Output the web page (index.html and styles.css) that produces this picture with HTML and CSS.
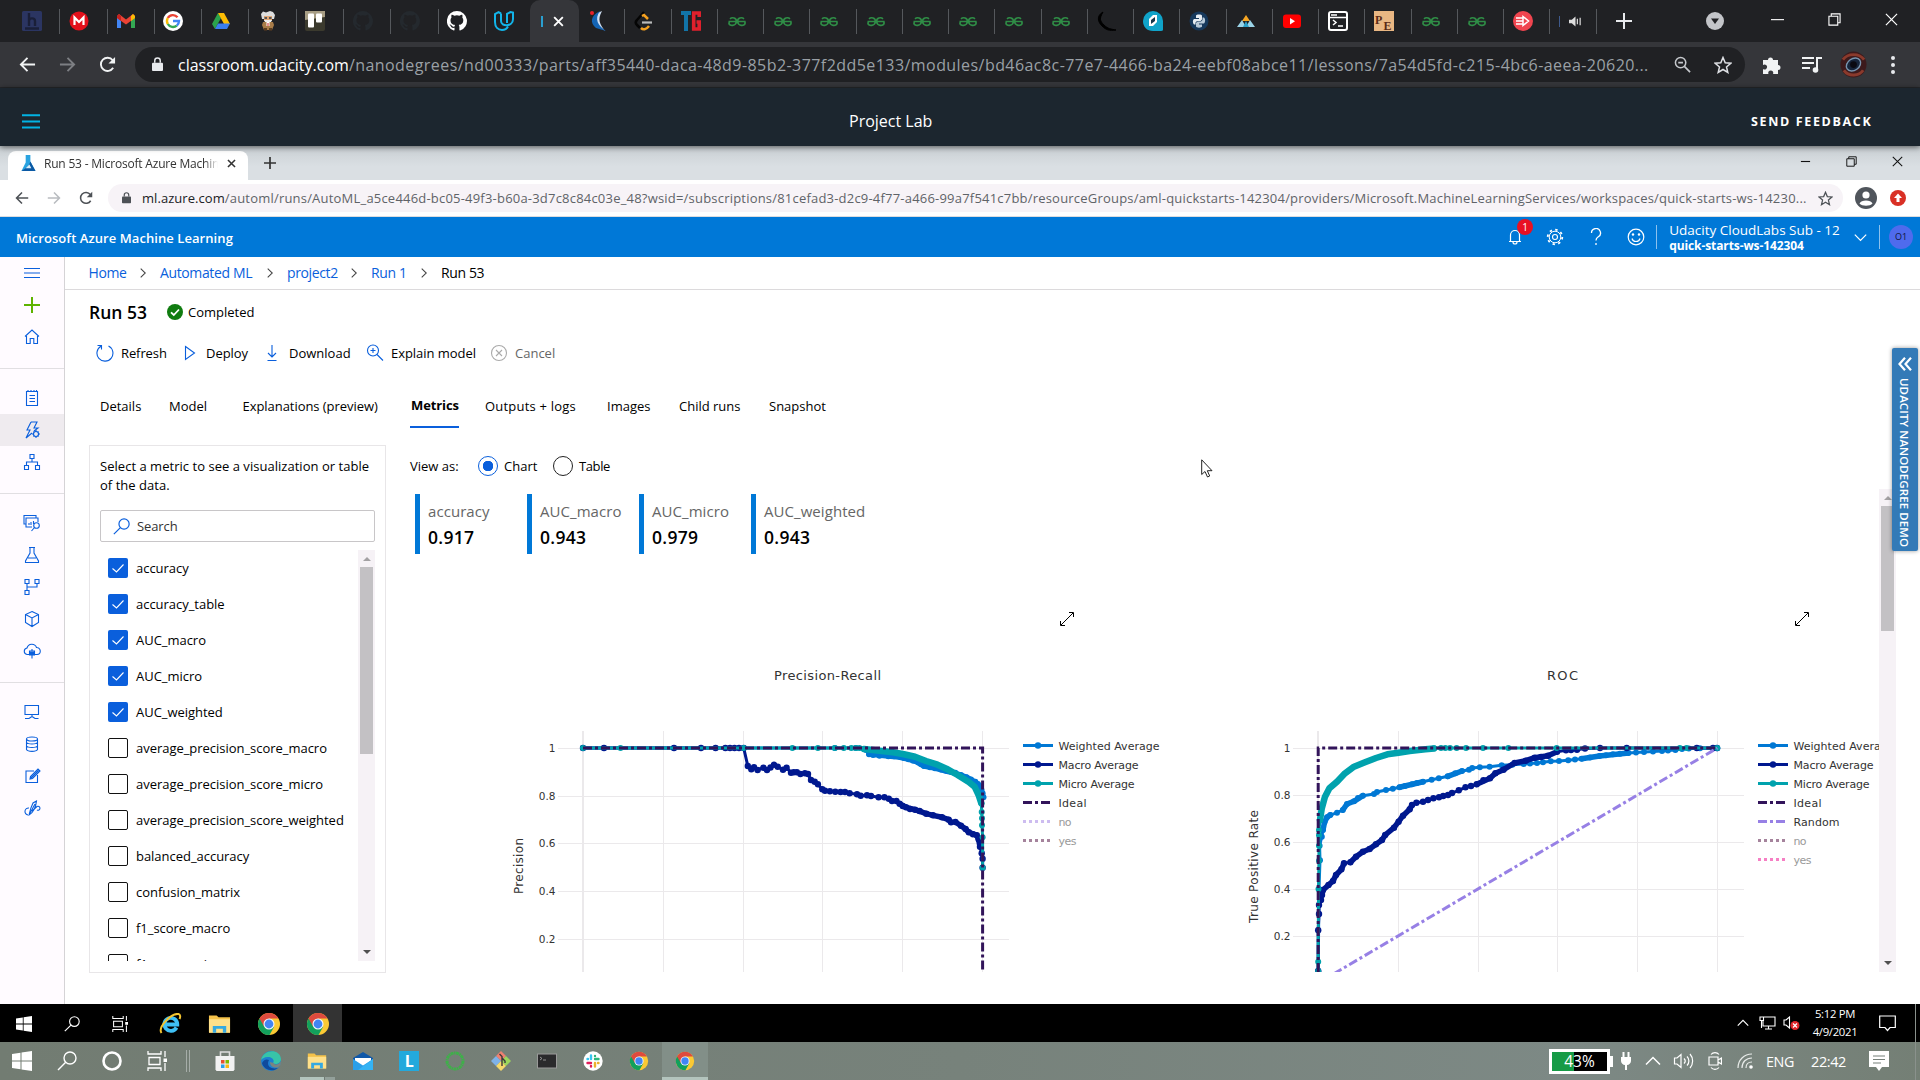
FILE: index.html
```html
<!DOCTYPE html>
<html lang="en">
<head>
<meta charset="utf-8">
<title>Project Lab</title>
<link rel="stylesheet" href="styles.css">
</head>
<body>
<svg class="defs" aria-hidden="true">
  <symbol id="gfg" viewBox="0 0 20 20"><path d="M1.500 10.500H18.500M9.500 10.500C9 15 2.500 15.500 2 12.500C2 10.500 2.500 10.500 2.500 10.500M3 7.800C5 6 9.500 6.500 9.500 10.500M10.500 10.500C11 15 17.500 15.500 18 12.500V10.500M17 7.800C15 6 10.500 6.500 10.500 10.500" fill="none" stroke="#2f8d46" stroke-width="1.700"/></symbol>
  <symbol id="github" viewBox="0 0 20 20"><path fill="currentColor" d="M10 0a10 10 0 0 0-3.200 19.500c.5.1.7-.2.7-.5v-2.200c-2.800.6-3.400-1.100-3.400-1.100-.5-1.200-1.100-1.500-1.100-1.500-.9-.6.1-.6.100-.6 1 .1 1.500 1 1.500 1 .9 1.500 2.400 1.100 2.900.8.100-.6.4-1.100.6-1.300-2.200-.3-4.600-1.100-4.600-5 0-1.100.4-2 1-2.700-.1-.3-.4-1.300.1-2.700 0 0 .9-.3 2.800 1a9.500 9.500 0 0 1 5 0c1.900-1.300 2.800-1 2.800-1 .5 1.400.2 2.400.1 2.700.6.7 1 1.600 1 2.700 0 3.900-2.400 4.700-4.600 5 .4.300.7.900.7 1.900V19c0 .3.200.6.700.5A10 10 0 0 0 10 0z"/></symbol>
  <symbol id="chrome" viewBox="0 0 24 24"><circle cx="12" cy="12" r="11" fill="#fbc934"/><path d="M12 12 2.500 6.500A11 11 0 0 0 12.500 23L17 15z" fill="#12a05c"/><path d="M2.500 6.500A11 11 0 0 1 21.500 6.500H12L7 14.500z" fill="#de4a3e"/><circle cx="12" cy="12" r="5.500" fill="#f4f6fb"/><circle cx="12" cy="12" r="4.400" fill="#4285f4"/></symbol>
  <symbol id="win" viewBox="0 0 20 20"><path fill="#fff" d="M0 3 8.500 1.800V9.500H0zM9.500 1.600 20 0V9.500H9.500zM0 10.500H8.500V18.200L0 17zM9.500 10.500H20V20L9.500 18.400z"/></symbol>
  <symbol id="lens" viewBox="0 0 20 20"><g fill="none" stroke="currentColor" stroke-width="1.400"><circle cx="13" cy="7" r="6"/><path d="M8.700 11.300 1 19"/></g></symbol>
  <symbol id="taskview" viewBox="0 0 20 20"><path d="M1 0V3H14V0M1 20V17H14V20M2 6.500H13V13.500H2zM18 0V6M18 12V20" fill="none" stroke="#fff" stroke-width="1.300"/><path d="M16.500 7.500H20V11H16.500z" fill="#fff"/></symbol>
  <symbol id="folder" viewBox="0 0 24 22"><path d="M1 2H9L11 4H23V20H1z" fill="#f5c24a"/><path d="M1 6H23V20H1z" fill="#ffe08a"/><path d="M5 20V13H19V20H15.500V16H8.500V20z" fill="#36a9e1"/></symbol>
  <symbol id="back" viewBox="0 0 18 18"><path d="M17 9H2M9 2 2 9 9 16" fill="none" stroke="currentColor" stroke-width="2"/></symbol>
  <symbol id="reload" viewBox="0 0 18 18"><path d="M15 12.500A7 7 0 1 1 14.500 4.500" fill="none" stroke="currentColor" stroke-width="2"/><path d="M17 1V8H10z" fill="currentColor"/></symbol>
  <symbol id="lock" viewBox="0 0 12 16"><path d="M1 6H11A1 1 0 0 1 12 7V14A1 1 0 0 1 11 15H1A1 1 0 0 1 0 14V7A1 1 0 0 1 1 6z" fill="currentColor"/><path d="M3 6V4A3 3 0 0 1 9 4V6" fill="none" stroke="currentColor" stroke-width="1.600"/></symbol>
  <symbol id="star" viewBox="0 0 18 18"><path d="M9 1.500 11.200 6.700 16.800 7.200 12.500 10.900 13.800 16.400 9 13.500 4.200 16.400 5.500 10.900 1.200 7.200 6.800 6.700z" fill="none" stroke="currentColor" stroke-width="1.500"/></symbol>
  <symbol id="restore" viewBox="0 0 14 14"><path d="M1 3.500H10.500V13H1zM3.500 3.500V1H13V10.500H10.500" fill="none" stroke="currentColor" stroke-width="1.200"/></symbol>
  <symbol id="cross" viewBox="0 0 14 14"><path d="M1 1 13 13M13 1 1 13" fill="none" stroke="currentColor" stroke-width="1.300"/></symbol>
  <symbol id="xbold" viewBox="0 0 14 14"><path d="M1.500 1.500 12.500 12.500M12.500 1.500 1.500 12.500" fill="none" stroke="currentColor" stroke-width="2.400"/></symbol>
  <symbol id="chev" viewBox="0 0 16 10"><path d="M1 8.500 8 1.500 15 8.500" fill="none" stroke="currentColor" stroke-width="1.500"/></symbol>
  <symbol id="crumb" viewBox="0 0 6 10"><path d="M.7.7 5.300 5 .7 9.300" fill="none" stroke="#444" stroke-width="1.100"/></symbol>
  <symbol id="expand" viewBox="0 0 14 14"><path d="M1 13 13 1M9 .5H13.500V5M.5 9V13.500H5" fill="none" stroke="#000" stroke-width="1"/></symbol>
  <symbol id="tick" viewBox="0 0 20 20"><path d="M4.500 10.500 8.500 14 15.500 6.500" fill="none" stroke="#fff" stroke-width="1.100"/></symbol>
</svg>

<header class="browser">
  <div class="tabs">
    <div class="tab first"><svg viewBox="0 0 20 20"><rect width="20" height="20" rx="1.500" fill="#2b3562"/><path d="M7 2V15M7 10C7 6.500 13 6.500 13 10V15M3 17.500H17" fill="none" stroke="#1a1f38" stroke-width="2.400"/></svg></div>
    <div class="tab"><svg viewBox="0 0 20 20"><circle cx="10" cy="10" r="9.500" fill="#e3101b"/><path d="M5.500 14V6.500L10 11 14.500 6.500V14" fill="none" stroke="#fff" stroke-width="2.200"/></svg></div>
    <div class="tab"><svg viewBox="0 0 20 20"><path d="M1 5V17H5V8z" fill="#4285f4"/><path d="M15 8V17H19V5z" fill="#34a853"/><path d="M1 5 3 3 10 8.500 17 3 19 5V7L10 13.500 1 7z" fill="#ea4335"/><path d="M15 5 17 3 19 5V7L15 10z" fill="#fbbc04"/><path d="M1 5 3 3 5 5V10L1 7z" fill="#c5221f"/></svg></div>
    <div class="tab"><svg viewBox="0 0 20 20"><circle cx="10" cy="10" r="10" fill="#fff"/><g fill="none" stroke-width="2.400"><path d="M14.500 6.200A6 6 0 0 0 4.800 7" stroke="#ea4335"/><path d="M4.800 7A6 6 0 0 0 4.800 13" stroke="#fbbc05"/><path d="M4.800 13A6 6 0 0 0 13.800 14.600" stroke="#34a853"/><path d="M13.800 14.600A6 6 0 0 0 16 10H10" stroke="#4285f4"/></g></svg></div>
    <div class="tab"><svg viewBox="0 0 20 20"><path d="M7 2 1 13 4 18 10 7z" fill="#2ba24c"/><path d="M7 2H13L19 13H13z" fill="#fbbc04"/><path d="M7 12.500H19L16 18H4z" fill="#3b7ded"/></svg></div>
    <div class="tab"><svg viewBox="0 0 20 20"><path d="M3 3 5 .5 8 1.500 12 0 15 1 17 4 16 8H4z" fill="#ddd"/><path d="M6 5H14V10H6z" fill="#e3a876"/><path d="M6.500 6H9V8H6.500zM11 6H13.500V8H11z" fill="#555"/><path d="M6 9H14L13 11H7z" fill="#eee"/><path d="M5 11H15L16 14 14 19H6L4 14z" fill="#a87c48"/><path d="M8.500 11H11.500V15H8.500z" fill="#fff"/><path d="M9.500 12H10.500V15H9.500z" fill="#c22"/><path d="M6 17H9V19.500H6zM11 17H14V19.500H11z" fill="#5a3c20"/></svg></div>
    <div class="tab"><svg viewBox="0 0 20 20"><rect width="20" height="20" rx="2" fill="#3b3a2e"/><path d="M0 0H20V6L0 9z" fill="#a79d84"/><rect x="3" y="2.500" width="6" height="14" rx="1" fill="#fff"/><rect x="11" y="2.500" width="6" height="9" rx="1" fill="#fff"/></svg></div>
    <div class="tab"><svg class="gh-dark"><use href="#github"/></svg></div>
    <div class="tab"><svg class="gh-dark"><use href="#github"/></svg></div>
    <div class="tab"><svg class="gh"><use href="#github"/></svg></div>
    <div class="tab"><svg viewBox="0 0 20 20"><path d="M7 2.500 4.500 1.200 1 3V11C1 16 4 19 8 19 11 19 13 17.500 14 15.500M7 2.500V10C7 16 19 16 19 8V1.500L16.500 1 13 2.800V12" fill="none" stroke="#12b5ea" stroke-width="2"/></svg></div>
    <div class="tab active"><i class="bar"></i><svg class="close"><use href="#xbold"/></svg></div>
    <div class="tab late bare"><svg viewBox="0 0 20 20"><path d="M13 0C5 3 4 8 7 12L16 20C11 13 8 9 13 0z" fill="#cfe0f5"/><path d="M11 0C1 5 1 12 7 17L17 20C9 15 5 8 11 0z" fill="#1464b4"/><circle cx="3" cy="2" r="2" fill="#e8202a"/></svg></div>
    <div class="tab late"><svg viewBox="0 0 20 20"><path d="M10 1 3 9C1 11 2 13 3 14L6 17" fill="none" stroke="#050505" stroke-width="2.500"/><path d="M8 5 10 4 14 8M15 15C12 19 9 19 7 17" fill="none" stroke="#f5a11f" stroke-width="2.500"/><path d="M8 11.500H18" stroke="#bbb" stroke-width="2.200"/></svg></div>
    <div class="tab late"><svg viewBox="0 0 20 20"><path d="M0 0H10V4H7V20H3V4H0z" fill="#1274a8"/><path d="M18.200 6V2H12.700V18H18.200V11H15.500" fill="none" stroke="#e0202c" stroke-width="3.600"/></svg></div>
    <div class="tab late"><svg><use href="#gfg"/></svg></div>
    <div class="tab late"><svg><use href="#gfg"/></svg></div>
    <div class="tab late"><svg><use href="#gfg"/></svg></div>
    <div class="tab late"><svg><use href="#gfg"/></svg></div>
    <div class="tab late"><svg><use href="#gfg"/></svg></div>
    <div class="tab late"><svg><use href="#gfg"/></svg></div>
    <div class="tab late"><svg><use href="#gfg"/></svg></div>
    <div class="tab late"><svg><use href="#gfg"/></svg></div>
    <div class="tab late"><svg viewBox="0 0 20 20"><path d="M6 1C-1 5 1 11 5 15S12 20 19 19C14 18 11 18 7 14S2 8 6 1z" fill="#000" stroke="#000"/></svg></div>
    <div class="tab late"><svg viewBox="0 0 20 20"><path d="M10 0A10 10 0 0 0 0 10C0 16 4 20 10 20H18C20 20 20 19 20 18V10A10 10 0 0 0 10 0z" fill="#10a3c9"/><path d="M10 4H14V11L10 15H6V8z" fill="#fff"/><path d="M12 6V10L8 13V9z" fill="#17364a"/></svg></div>
    <div class="tab late"><svg viewBox="0 0 20 20"><circle cx="10" cy="10" r="9.500" fill="#17395c"/><path d="M7 4.500C7 3 13 3 13 4.500V8.500L11.500 10H8L6.500 11.500V13.500H5C3.500 12 3.500 9 5 8H10V7H7z" fill="#e8edf2"/><path d="M13 15.500C13 17 7 17 7 15.500V12L8.500 10.500H12L13.500 9V6.500H15C16.500 8 16.500 11 15 12.500H10V13.500H13z" fill="#b9cad8"/></svg></div>
    <div class="tab late"><svg viewBox="0 0 20 20"><path d="M10 4 14 10H6z" fill="#f6a623"/><path d="M6 9 10 16H1zM14 9 19 16H10z" fill="#9bd4e8"/><path d="M10 10 13 16H7z" fill="#2aa0c8"/></svg></div>
    <div class="tab late"><svg viewBox="0 0 20 20"><rect x="1" y="3.500" width="18" height="13.500" rx="3" fill="#f00"/><path d="M8 7 13 10.200 8 13.500z" fill="#fff"/></svg></div>
    <div class="tab late"><svg viewBox="0 0 20 20"><rect x="1" y="1" width="18" height="18" rx="2" fill="none" stroke="#fff" stroke-width="2"/><path d="M1 6.500H19M3 4H9M5 9 8 11.500 5 14M10 15H15" fill="none" stroke="#fff" stroke-width="1.500"/></svg></div>
    <div class="tab late"><svg viewBox="0 0 20 20"><rect width="20" height="20" fill="#e9b783"/><text x="1" y="13" class="pe">P</text><text x="9.500" y="18.500" class="pe">E</text></svg></div>
    <div class="tab late"><svg><use href="#gfg"/></svg></div>
    <div class="tab late"><svg><use href="#gfg"/></svg></div>
    <div class="tab late"><svg viewBox="0 0 20 20"><circle cx="10" cy="10" r="10" fill="#f0454f"/><path d="M3 7H10M3 10H10M3 13H10M10 5.500 15.500 10 10 14.500z" fill="none" stroke="#fff" stroke-width="1.500"/></svg></div>
    <div class="tab late"><i class="bar dim"></i><svg class="snd" viewBox="0 0 14 14"><path d="M0 5H3L7 1.500V12.500L3 9H0z" fill="#ddd"/><path d="M9 4V10M12 3V11" stroke="#ddd" stroke-width="1.300"/></svg></div>
    <div class="tab late"><svg class="plus" viewBox="0 0 16 16"><path d="M8 0V16M0 8H16" stroke="#e8eaed" stroke-width="2"/></svg></div>
    <div class="winbtns">
      <svg class="w18" viewBox="0 0 18 18"><circle cx="9" cy="9" r="9" fill="#c3c5c9"/><path d="M5 6.500H13L9 12z" fill="#202124"/></svg>
      <svg class="w14" viewBox="0 0 14 14"><path d="M0 5H14" stroke="#fff" stroke-width="1.200"/></svg>
      <svg class="w14 up1"><use href="#restore"/></svg>
      <svg class="w14 up1"><use href="#cross"/></svg>
    </div>
  </div>
  <div class="toolbar">
    <svg class="t1"><use href="#back"/></svg><svg class="t2"><use href="#back"/></svg><svg class="t3"><use href="#reload"/></svg>
    <div class="omni"><svg class="lk"><use href="#lock"/></svg><span class="url"><b>classroom.udacity.com</b>/nanodegrees/nd00333/parts/aff35440-daca-48d9-85b2-377f2dd5e133/modules/bd46ac8c-77e7-4466-ba24-eebf08abce11/lessons/7a54d5fd-c215-4bc6-aeea-20620...</span>
      <svg class="mag" viewBox="0 0 18 18"><circle cx="7" cy="7" r="5.500" fill="none" stroke="#c5c8cc" stroke-width="1.600"/><path d="M11 11 17 17M4.500 7H9.500" stroke="#c5c8cc" stroke-width="1.800"/></svg>
      <svg class="st"><use href="#star"/></svg></div>
    <svg class="ext" viewBox="0 0 20 20"><path d="M1 5H6A2.500 2.500 0 1 1 11 5H16V10A2.500 2.500 0 1 1 16 15V19H11A2.500 2.500 0 1 0 6.500 19H1V14A2.500 2.500 0 1 0 1 10z" fill="#f1f3f4"/></svg>
    <svg class="ext" viewBox="0 0 20 20"><path d="M0 3H12M0 8H12M0 13H8M15 15V3H20" stroke="#f1f3f4" stroke-width="2" fill="none"/><circle cx="13.500" cy="15" r="2.800" fill="#f1f3f4"/></svg>
    <svg class="ava" viewBox="0 0 28 28"><circle cx="14" cy="14" r="13.500" fill="#3c1a1c"/><path d="M3 9C8 2 20 2 25 9M4 20C9 27 20 26 24 20" stroke="#8a3a2c" stroke-width="3" fill="none"/><ellipse cx="14" cy="14" rx="8" ry="6" fill="#16243a" stroke="#7895b0" stroke-width="1.500" transform="rotate(-35 14 14)"/><circle cx="14" cy="14" r="3.500" fill="#0a0a12"/></svg>
    <svg class="dots" viewBox="0 0 4 18"><g fill="#e8eaed"><circle cx="2" cy="2" r="2"/><circle cx="2" cy="9" r="2"/><circle cx="2" cy="16" r="2"/></g></svg>
  </div>
</header>

<div class="lab">
  <svg class="burger" viewBox="0 0 18 15"><path d="M0 1.200H18M0 7.500H18M0 13.500H18" stroke="#02b3e4" stroke-width="2"/></svg>
  <span class="lab-title">Project Lab</span>
  <span class="feedback">SEND FEEDBACK</span>
</div>

<div class="itabs">
  <div class="itab"><svg class="flask" viewBox="0 0 16 17"><path d="M5 0H10V7L15.500 17H.5L5 8z" fill="#2aa3e0"/><path d="M10 7 15.500 17H.5L8 12z" fill="#0b59a4"/><path d="M5 14 9 10 11 14z" fill="#d9edf9"/></svg><span class="ititle">Run 53 - Microsoft Azure Machin</span><svg class="iclose"><use href="#xbold"/></svg></div>
  <svg class="iplus" viewBox="0 0 12 12"><path d="M6 0V12M0 6H12" stroke="#333" stroke-width="1.700"/></svg>
  <div class="iwin"><svg viewBox="0 0 12 12"><path d="M1 6H11" stroke="#111" stroke-width="1.200"/></svg><svg><use href="#restore"/></svg><svg><use href="#cross"/></svg></div>
</div>
<div class="ibar">
  <svg class="i1"><use href="#back"/></svg><svg class="i2"><use href="#back"/></svg><svg class="i3"><use href="#reload"/></svg>
  <div class="iomni"><svg class="ilk"><use href="#lock"/></svg><span class="iurl"><b>ml.azure.com</b>/automl/runs/AutoML_a5ce446d-bc05-49f3-b60a-3d7c8c84c03e_48?wsid=/subscriptions/81cefad3-d2c9-4f77-a466-99a7f541c7bb/resourceGroups/aml-quickstarts-142304/providers/Microsoft.MachineLearningServices/workspaces/quick-starts-ws-14230...</span><svg class="ist"><use href="#star"/></svg></div>
  <svg class="user" viewBox="0 0 22 22"><circle cx="11" cy="11" r="11" fill="#50555c"/><circle cx="11" cy="8" r="3.600" fill="#fff"/><path d="M4.500 16.500C6 12.500 16 12.500 17.500 16.500 15 19.500 7 19.500 4.500 16.500z" fill="#fff"/></svg>
  <svg class="upd" viewBox="0 0 16 16"><circle cx="8" cy="8" r="8" fill="#d93025"/><path d="M8 3.500 12 8H9.500V12H6.500V8H4z" fill="#fff"/></svg>
</div>

<div class="azbar">
  <span class="az-name">Microsoft Azure Machine Learning</span>
  <div class="az-ic bell"><svg viewBox="0 0 18 18"><path d="M3 13.500H15M4.500 13.500V7A4.500 4.500 0 0 1 13.500 7V13.500M7 14A2 2 0 0 0 11 14" fill="none" stroke="#fff" stroke-width="1.200"/></svg><span class="badge">1</span></div>
  <div class="az-ic"><svg viewBox="0 0 18 18"><circle cx="9" cy="9" r="7.300" fill="none" stroke="#fff" stroke-width="1.800" stroke-dasharray="2.400 3.330"/><circle cx="9" cy="9" r="5.800" fill="none" stroke="#fff"/><circle cx="9" cy="9" r="2.500" fill="none" stroke="#fff" stroke-width="1.100"/></svg></div>
  <div class="az-ic"><svg viewBox="0 0 18 18"><path d="M4.500 5A4.500 4.500 0 1 1 11 9C9.500 10 9 10.500 9 12.500M9 15V17" fill="none" stroke="#fff" stroke-width="1.300"/></svg></div>
  <div class="az-ic"><svg viewBox="0 0 18 18"><circle cx="9" cy="9" r="7.800" fill="none" stroke="#fff" stroke-width="1.200"/><path d="M5 10.500C6 14.500 12 14.500 13 10.500" fill="none" stroke="#fff" stroke-width="1.200"/><circle cx="6" cy="6.500" r="1.200" fill="#fff"/><circle cx="12" cy="6.500" r="1.200" fill="#fff"/></svg></div>
  <div class="az-acct"><span>Udacity CloudLabs Sub - 12</span><b>quick-starts-ws-142304</b></div>
  <svg class="az-chev"><use href="#chev"/></svg>
  <div class="az-av"><span>O1</span></div>
</div>

<div class="body">
  <nav class="side">
    <div><svg viewBox="0 0 18 18"><path d="M1 4.500H17M1 9H17M1 13.500H17"/></svg></div>
    <div><svg class="green" viewBox="0 0 18 18"><path d="M9 1V17M1 9H17"/></svg></div>
    <div><svg viewBox="0 0 18 18"><path d="M2 8.500 9 2 16 8.500M3.500 8V15.500H7.200V10.500H10.800V15.500H14.500V8"/></svg></div>
    <hr>
    <div><svg viewBox="0 0 18 18"><path d="M3.500 2.500H14.500V16.500H3.500zM6.500 6.500H12M6.500 9.500H12M6.500 12.500H12M5 1V3M8 1V3M11 1V3M13.500 1V3"/></svg></div>
    <div class="on"><svg viewBox="0 0 18 18"><path d="M8 1H14L11 7H15L11 10M8 1 4 9H7L3 17 9 12"/><circle cx="13" cy="13" r="2.500"/><path d="M13 9V10.500M13 15.500V17M9 13H10.500M15.500 13H17M10.500 10.500 11.300 11.300M15.500 10.500 14.700 11.300M10.500 15.500 11.300 14.700M15.500 15.500 14.700 14.700"/></svg></div>
    <div><svg viewBox="0 0 18 18"><path d="M7 1.500H11V5.500H7zM1.500 12.500H5.500V16.500H1.500zM12.500 12.500H16.500V16.500H12.500zM9 5.500V9M3.500 12.500V9H14.500V12.500"/></svg></div>
    <hr>
    <div><svg viewBox="0 0 18 18"><path d="M3 10H1V1.500H13V4M9 13H3V4H15V8M6 11V9M8 11V8M10.500 10V7M8.500 17 11.500 13.500"/><circle cx="13.500" cy="11.500" r="2.800"/></svg></div>
    <div><svg viewBox="0 0 18 18"><path d="M6 1.500H12M7 1.500V7L2.500 15V16.500H15.500V15L11 7V1.500M5 12H13"/></svg></div>
    <div><svg viewBox="0 0 18 18"><path d="M2 1.500H6V5.500H2zM12 1.500H16V5.500H12zM2 12.500H6V16.500H2zM4 5.500V12.500M4 9H14V5.500"/></svg></div>
    <div><svg viewBox="0 0 18 18"><path d="M9 1.500 15.500 4.500V12.500L9 16.500 2.500 12.500V4.500zM2.500 4.500 9 8 15.500 4.500M9 8V16.500"/></svg></div>
    <div><svg viewBox="0 0 18 18"><path d="M6 12.500H4A3.300 3.300 0 0 1 4 6 5 5 0 0 1 13.500 5.500 3.500 3.500 0 0 1 14 12.500H12"/><path d="M6.500 9H11.500V13H6.500zM9 7V9M9 13V16.500"/><path d="M7 10.500H11M7 12H11" stroke-width="2"/></svg></div>
    <hr>
    <div><svg viewBox="0 0 18 18"><path d="M2 2.500H15.500V11.500H2zM9 11.500V14M2 15.500H6L9 13.500 12 15.500H15.500"/></svg></div>
    <div><svg viewBox="0 0 18 18"><ellipse cx="9" cy="4" rx="5.500" ry="2"/><path d="M3.500 4V14.500C5 17 13 17 14.500 14.500V4M3.500 7.500C5 9.500 13 9.500 14.500 7.500M3.500 11C5 13 13 13 14.500 11"/></svg></div>
    <div><svg viewBox="0 0 18 18"><path d="M14.500 8V15.500H3V4H11M7 12 7.500 9.500 15 2 17 4 9.500 11.500zM8 11 15.500 3.500"/></svg></div>
    <div><svg viewBox="0 0 18 18"><path d="M6 16C10 14 13 8 13.500 2L10 4C8 8 7 11 6 16zM9 12 14 7.500A2 2 0 1 1 14 11M6 9A3.500 3.500 0 1 0 5 16M6 16 12 5"/></svg></div>
  </nav>
  <main class="main">
    <div class="crumbs">
      <a class="c1">Home</a><svg><use href="#crumb"/></svg><a class="c2">Automated ML</a><svg><use href="#crumb"/></svg><a class="c3">project2</a><svg><use href="#crumb"/></svg><a class="c4">Run 1</a><svg><use href="#crumb"/></svg><span>Run 53</span>
    </div>
    <div class="head"><h1>Run 53</h1><svg viewBox="0 0 16 16"><circle cx="8" cy="8" r="8" fill="#107c10"/><path d="M4 8.300 6.800 11 12 5.500" fill="none" stroke="#fff" stroke-width="1.800"/></svg><span>Completed</span></div>
    <div class="cmds">
      <div class="k1"><svg viewBox="0 0 18 18"><path d="M12.500 2A8 8 0 1 1 5 2.200M1.500 1.500H5.500V5.500"/></svg>Refresh</div>
      <div class="k2"><svg viewBox="0 0 18 18"><path d="M4.500 2.500 13.500 9 4.500 15.500z"/></svg>Deploy</div>
      <div class="k3"><svg viewBox="0 0 18 18"><path d="M9 1V13M5 9 9 13 13 9M4.500 16.500H13.500"/></svg>Download</div>
      <div class="k4"><svg viewBox="0 0 18 18"><circle cx="7" cy="6.500" r="5.500"/><path d="M11 10.500 17 16.500M4.500 6.500H9.500M7 4V9"/></svg>Explain model</div>
      <div class="k5"><svg viewBox="0 0 18 18"><circle cx="9" cy="9" r="7.500"/><path d="M6 6 12 12M12 6 6 12"/></svg>Cancel</div>
    </div>
    <div class="pivot">
      <span class="p1">Details</span><span class="p2">Model</span><span class="p3">Explanations (preview)</span><span class="p4">Metrics</span><span class="p5">Outputs + logs</span><span class="p6">Images</span><span class="p7">Child runs</span><span class="p8">Snapshot</span>
    </div>
    <div class="content">
      <section class="panel">
        <p>Select a metric to see a visualization or table<br>of the data.</p>
        <div class="search"><svg><use href="#lens"/></svg>Search</div>
        <div class="listwrap">
          <ul>
            <li><i class="on"><svg><use href="#tick"/></svg></i>accuracy</li>
            <li><i class="on"><svg><use href="#tick"/></svg></i>accuracy_table</li>
            <li><i class="on"><svg><use href="#tick"/></svg></i>AUC_macro</li>
            <li><i class="on"><svg><use href="#tick"/></svg></i>AUC_micro</li>
            <li><i class="on"><svg><use href="#tick"/></svg></i>AUC_weighted</li>
            <li><i></i>average_precision_score_macro</li>
            <li><i></i>average_precision_score_micro</li>
            <li><i></i>average_precision_score_weighted</li>
            <li><i></i>balanced_accuracy</li>
            <li><i></i>confusion_matrix</li>
            <li><i></i>f1_score_macro</li>
            <li><i></i>f1_score_micro</li>
          </ul>
          <div class="sbar"><b class="up"></b><em></em><b class="dn"></b></div>
        </div>
      </section>
      <section class="viz">
        <div class="viewas"><span class="va">View as:</span><i class="sel"></i><span class="vc">Chart</span><i></i><span class="vt">Table</span></div>
        <div class="vbody">
          <div class="vleft">
            <div class="cards">
              <div><span>accuracy</span><b>0.917</b></div><div><span>AUC_macro</span><b>0.943</b></div><div><span>AUC_micro</span><b>0.979</b></div><div><span>AUC_weighted</span><b>0.943</b></div>
            </div>
            <div class="charts">
<svg class="ch1" viewBox="500 600 700 372">
  <defs>
    <marker id="mb" markerUnits="userSpaceOnUse" markerWidth="8" markerHeight="8" refX="4" refY="4"><circle cx="4" cy="4" r="3" fill="#0078d4"/></marker>
    <marker id="mn" markerUnits="userSpaceOnUse" markerWidth="8" markerHeight="8" refX="4" refY="4"><circle cx="4" cy="4" r="3.200" fill="#00188f"/></marker>
    <marker id="mt" markerUnits="userSpaceOnUse" markerWidth="8" markerHeight="8" refX="4" refY="4"><circle cx="4" cy="4" r="3" fill="#00a2ad"/></marker>
  </defs>
  <use href="#expand" x="1060" y="612" width="14" height="14"/>
  <text class="ctitle" x="774" y="680" textLength="107">Precision-Recall</text>
  <path class="grid" d="M663.500 731V972M743.500 731V972M822.500 731V972M902.500 731V972M982.500 731V972M558 748.500H1009M558 796.500H1009M558 843.500H1009M558 891.500H1009M558 939.500H1009"/>
  <path class="grid zero" d="M583 731V972"/>
  <g class="ax"><text x="555.500" y="752">1</text><text x="555.500" y="800">0.8</text><text x="555.500" y="847">0.6</text><text x="555.500" y="895">0.4</text><text x="555.500" y="943">0.2</text></g>
  <text class="ay" transform="translate(523 894) rotate(-90)" textLength="56">Precision</text>
  <polyline class="s blue" points="583,748 604,748 674,748 743.700,748 834.800,748 855.800,748 866,750 869,754.300 873,755 879.500,755.700 888.400,756.300 894,756.300 899.500,756.700 904,758 908.500,759.300 913,760.500 917.400,761.700 921,764 924,766 930,767.300 935,768.300 941,769.500 946.400,770.700 951,771.700 955.400,772.700 961,775 966.500,777.300 971,779.500 975.400,781.700 978,784 980,786 981.500,790 982.600,793.300 983.500,797.300"/>
  <path class="thick blue" d="M869 754 888 756 899 757 908 759 917 762 924 766 935 768 946 771 955 773 966 777 975 782 980 787 983 797"/>
  <polyline class="s navy" points="583,748 604,748 674,748 701,748 715.600,748 725.400,748 730,748 734.500,748 739,748 743.700,748 747.800,766 751.300,769.300 754,767.300 757.600,770 763.400,767.700 767,770 770.500,767.500 774,764.700 777.700,766.700 783,769.700 786.600,767.700 791,772.700 793.800,772.300 796.900,772.300 800.400,774 804.900,773.300 808,774 811,780 814.700,781.700 817.900,784.300 822.300,789.300 825,790.700 829.900,791.300 835.300,791.700 840.600,792 845,792 849.600,793.300 857,794.300 860.700,795.700 867,795.300 871,796 878.600,797.300 884.400,797.300 888.800,798.700 892,801 896.400,801 899.600,803.700 902.700,806 906,807.300 910,809 915,809.700 919.600,811 926.300,813.700 933,815.300 942,817.300 948.700,819.700 951,822.300 955.400,822 961,825.700 965.600,829 968.800,832.300 973,834.300 976.800,835.300 978.600,839.300 980,846.700 981.700,853.300 982.600,858.700 982.600,867.700"/>
  <path class="thick navy" d="M899.600 803.700 906 807.300 915 809.700 926.300 813.700 933 815.300 942 817.300 948.700 819.700M955.400 822 961 825.700 965.600 829 968.800 832.300 976.800 835.300 978.600 839.300 980 846.700"/>
  <polyline class="s teal" points="583,748 620.500,748 743.700,748 792.400,748 817.900,748 834.800,748 843.800,748 851.300,748 855.800,748 859.400,748 864,749"/>
  <path class="thicker teal" d="M864 749 879.500 750.700 893 752.300 904 754.300 915 756.700 926 761 937.500 764.700 946.400 768.700 957.600 775 968.800 782 974.600 786.700 978.600 795 981.300 803.300"/>
  <polyline class="s teal" points="981.300,803.300 981.700,812 982,818.300 982,825.300 982.600,837.300 982.600,867.700"/>
  <path class="ideal" d="M583 748H982.600V972"/>
  <g class="lg">
    <path class="blue" d="M1023 745.500H1053"/><circle cx="1038" cy="745.500" r="3.200" fill="#0078d4"/><text x="1058.500" y="749.500" textLength="101">Weighted Average</text>
    <path class="navy" d="M1023 764.500H1053"/><circle cx="1038" cy="764.500" r="3.200" fill="#00188f"/><text x="1058.500" y="768.500" textLength="80">Macro Average</text>
    <path class="teal" d="M1023 783.500H1053"/><circle cx="1038" cy="783.500" r="3.200" fill="#00a2ad"/><text x="1058.500" y="787.500" textLength="76">Micro Average</text>
    <path class="ideal" d="M1023 802.500H1053"/><text x="1058.500" y="806.500" textLength="28">Ideal</text>
    <path class="dot" stroke="#cdbcf0" d="M1023 821.500H1053"/><text class="off" x="1058.500" y="825.500" textLength="13">no</text>
    <path class="dot" stroke="#a5839c" d="M1023 840.500H1053"/><text class="off" x="1058.500" y="844.500" textLength="18">yes</text>
  </g>
</svg>
<svg class="ch2" viewBox="1200 600 679 372">
  <use href="#expand" x="1795" y="612" width="14" height="14"/>
  <text class="ctitle" x="1547" y="680" textLength="31">ROC</text>
  <path class="grid" d="M1398.500 731V972M1478.500 731V972M1557.500 731V972M1637.500 731V972M1717.500 731V972M1293 748.500H1744M1293 795.500H1744M1293 842.500H1744M1293 889.500H1744M1293 936.500H1744"/>
  <path class="grid zero" d="M1318 731V972"/>
  <g class="ax"><text x="1290.500" y="752">1</text><text x="1290.500" y="799">0.8</text><text x="1290.500" y="846">0.6</text><text x="1290.500" y="893">0.4</text><text x="1290.500" y="940">0.2</text></g>
  <text class="ay" transform="translate(1258 923) rotate(-90)" textLength="113">True Positive Rate</text>
  <polyline class="s blue" points="1318.200,971 1319,889 1320,860.300 1319.600,845.700 1321.800,836.700 1323,830 1324.500,822.300 1327,817.300 1330.300,815 1337,812.700 1342.800,810 1347,804 1354,801.300 1358,798 1362.900,795.700 1374,794 1377,792 1386,790 1392.800,788.700 1399.500,787.300 1405,786 1412,784.300 1417,783 1423,781.700 1431.600,779.700 1438.800,778.300 1447.700,776.300 1455.300,773.300 1462,771 1469,769.700 1472.200,768 1479.800,767.300 1489.600,766.700 1501.700,765.300 1512.400,764.700 1523.600,764 1530,763.500 1537,763 1543,762.300 1550.800,761.300 1559,761 1568.200,760.300 1575,759.500 1581.600,758.700 1590,757.500 1599.500,756 1606,755.200 1612.900,754.300 1620,753.800 1628.500,753 1636,752.500 1644,752 1653,751.500 1662,751 1668,750.500 1675.400,750 1682,749 1688.800,748.500 1700,748.300 1717.300,748.300"/>
  <path class="thick blue" d="M1323 830 1324.500 822.300 1327 817.300 1330.300 815M1342.800 810 1347 804 1354 801.300 1362.900 795.700M1399.500 787.300 1423 781.700M1447.700 776.300 1462 771M1581.600 758.700 1599.500 756 1628.500 753"/>
  <polyline class="s navy" points="1318.200,971 1318.200,930.300 1319,914 1319,905 1321,900 1322,895 1323,890 1328.500,885 1333,881 1336,875 1341.400,869.300 1344,863.300 1350.400,862.300 1356,856.700 1362.900,851.700 1369.600,849 1376,844.300 1382,840 1385.200,835 1394,827.700 1398.600,821.700 1403,815.700 1409.700,809.300 1412,805 1416.400,802.700 1423,801.700 1428,800 1433.400,798.300 1439,797.300 1443.200,796 1448,795 1452,793 1458.800,790.300 1465.500,787.300 1471,786 1476.700,784.300 1483.400,780.300 1490,778.300 1495.400,773.300 1503.500,769.700 1514.600,763 1525.800,760.700 1534.700,757.700 1541,757 1548,755.700 1557,751.700 1566,750.300 1571,750 1577,749.700 1585,748.500 1600,748 1626.700,748 1696.800,748 1713,748 1717,748"/>
  <path class="thick navy" d="M1322 895 1323 890 1328.500 885 1333 881 1336 875 1341.400 869.300 1344 863.300M1350.400 862.300 1356 856.700 1362.900 851.700 1369.600 849 1376 844.300 1382 840 1385.200 835 1394 827.700 1398.600 821.700 1403 815.700 1409.700 809.300 1412 805M1476.700 784.300 1490 778.300 1495.400 773.300 1503.500 769.700 1514.600 763 1525.800 760.700 1534.700 757.700 1548 755.700 1557 751.700"/>
  <polyline class="s teal" points="1318.200,971 1318.200,961.700 1318.500,889 1319,860.700 1319,845.700 1319,835.300 1319,830 1320,820"/>
  <path class="thicker teal" d="M1320 820 1321.800 808.300 1325 796.700 1329.400 788.300 1337 781.700 1345 773.300 1354 766.700 1365 762.300 1376 758 1387.400 754.300 1398.600 752.700 1409.700 751 1425.400 749.300 1434 748.500"/>
  <polyline class="s teal" points="1434,748.300 1441,748 1445.400,748 1450,748 1456.600,748 1466,748 1483,748 1508.400,748 1556.600,748 1679.800,748 1686.500,748 1717.300,748"/>
  <path class="ideal" d="M1318.200 972V748H1717.300"/>
  <path class="ideal rnd" d="M1318.200 983 1717.300 748"/>
  <g class="lg">
    <path class="blue" d="M1758 745.500H1788"/><circle cx="1773" cy="745.500" r="3.200" fill="#0078d4"/><text x="1793.500" y="749.500" textLength="101">Weighted Average</text>
    <path class="navy" d="M1758 764.500H1788"/><circle cx="1773" cy="764.500" r="3.200" fill="#00188f"/><text x="1793.500" y="768.500" textLength="80">Macro Average</text>
    <path class="teal" d="M1758 783.500H1788"/><circle cx="1773" cy="783.500" r="3.200" fill="#00a2ad"/><text x="1793.500" y="787.500" textLength="76">Micro Average</text>
    <path class="ideal" d="M1758 802.500H1788"/><text x="1793.500" y="806.500" textLength="28">Ideal</text>
    <path class="ideal rnd" d="M1758 821.500H1788"/><text x="1793.500" y="825.500" textLength="46">Random</text>
    <path class="dot" stroke="#a5839c" d="M1758 840.500H1788"/><text class="off" x="1793.500" y="844.500" textLength="13">no</text>
    <path class="dot" stroke="#f67fc4" d="M1758 859.500H1788"/><text class="off" x="1793.500" y="863.500" textLength="18">yes</text>
  </g>
</svg>
            </div>
          </div>
          <div class="sbar main-bar"><b class="up"></b><em></em><b class="dn"></b></div>
        </div>
      </section>
    </div>
  </main>
</div>

<footer class="tb inner">
  <div class="cell48"><svg class="s16"><use href="#win"/></svg></div>
  <div class="cell48"><svg class="s16w"><use href="#lens"/></svg></div>
  <div class="cell48"><svg class="s16"><use href="#taskview"/></svg></div>
  <div class="cell49 pad"><svg class="s22" viewBox="0 0 22 22"><path d="M17 14.500A6.500 6.500 0 1 1 17.800 11.500H6" fill="none" stroke="#3fc0f5" stroke-width="3.800"/><path d="M2 20C-2 14 12 0 19 1 21 1.500 21 4 20 6" fill="none" stroke="#f4c430" stroke-width="2"/></svg></div>
  <div class="cell49"><svg class="s22"><use href="#folder"/></svg></div>
  <div class="cell49"><svg class="s24"><use href="#chrome"/></svg></div>
  <div class="cell49 cur"><svg class="s24"><use href="#chrome"/></svg></div>
  <div class="tray1">
    <svg class="a1"><use href="#chev"/></svg>
    <svg class="a2" viewBox="0 0 17 14"><path d="M5 1H16V10H4V5M1 1H4.500V4.500H1zM2.500 4.500V12M9.500 10V13M6 13H13" fill="none" stroke="#fff" stroke-width="1.100"/></svg>
    <svg class="a3" viewBox="0 0 17 14"><path d="M1 4H3L6.500 1V12L3 9H1z" fill="none" stroke="#fff" stroke-width="1.100"/><circle cx="12" cy="9.500" r="4.500" fill="#e2252b"/><path d="M10 7.500 14 11.500M14 7.500 10 11.500" stroke="#fff" stroke-width="1.200"/></svg>
    <div class="clock"><span>5:12 PM</span><span>4/9/2021</span></div>
    <svg class="a4" viewBox="0 0 17 17"><path d="M.7 1H16.300V12.500H11L8.500 15.500 6 12.500H.7z" fill="none" stroke="#fff" stroke-width="1.200"/></svg>
  </div>
</footer>
<footer class="tb outer">
  <div class="cell45"><svg class="s20"><use href="#win"/></svg></div>
  <div class="cell45"><svg class="s20w"><use href="#lens"/></svg></div>
  <div class="cell45"><svg class="s20" viewBox="0 0 20 20"><circle cx="10" cy="10" r="8.500" fill="none" stroke="#fff" stroke-width="2.600"/></svg></div>
  <div class="cell45"><svg class="s20"><use href="#taskview"/></svg></div>
  <div class="split"><i></i></div>
  <div class="cell46"><svg class="s20" viewBox="0 0 20 20"><path d="M5.500 5V1H14.500V5" fill="none" stroke="#ddd" stroke-width="1.600"/><path d="M.5 5H19.500V18.500L18.500 20H1.500L.5 18.500z" fill="#f2f2f2"/><path d="M6 9H9.500V12.500H6z" fill="#e8502e"/><path d="M10.500 9H14V12.500H10.500z" fill="#7fba00"/><path d="M6 13.500H9.500V17H6z" fill="#2aa0ec"/><path d="M10.500 13.500H14V17H10.500z" fill="#fdb813"/></svg></div>
  <div class="cell46"><svg class="s20" viewBox="0 0 20 20"><circle cx="10" cy="10" r="10" fill="#1e7fd0"/><path d="M0 9C2-2 19-3 20 8 20 13 14 14 12 12 14 9 11 6 7 6 3 6 1 8 0 9z" fill="#37c4a8"/><path d="M8 9C5 14 9 19 17 17 11 22 2 18 1 12 3 8 6 8 8 9z" fill="#0f4a9c"/><path d="M12.500 12C14 15 19 13 20 10L19.500 14 17 16.500C12 17 9 15 9 11z" fill="#7b857e"/></svg></div>
  <div class="cell46 run"><svg class="s20"><use href="#folder"/></svg></div>
  <div class="cell46"><svg class="s20" viewBox="0 0 20 20"><path d="M0 7 10 1 20 7V19H0z" fill="#1058a8"/><path d="M2 7H18V12L10 16 2 12z" fill="#fff"/><path d="M0 8 10 14.500 20 8V19H0z" fill="#2b9fe8"/><path d="M20 8V19H5z" fill="#34b3f4"/></svg></div>
  <div class="cell46"><span class="ell">L</span></div>
  <div class="cell46"><svg class="s20" viewBox="0 0 20 20"><circle cx="10" cy="10" r="8" fill="none" stroke="#3eb049" stroke-width="3" stroke-dasharray="3 .6 1.400 .5"/></svg></div>
  <div class="cell46"><svg class="s20" viewBox="0 0 20 20"><path d="M10 0 15 5 10 10 5 5z" fill="#f08070"/><path d="M5 5 10 10 5 15 0 10z" fill="#7fb2e8"/><path d="M15 5 20 10 15 15 10 10z" fill="#9bd65c"/><path d="M10 10 15 15 10 20 5 15z" fill="#f6d96a"/><path d="M8.500 3 11 5.500V15M11 7 14 10V12" stroke="#3a3a3a" stroke-width="1.400" fill="none"/></svg></div>
  <div class="cell46"><svg class="s20" viewBox="0 0 20 20"><rect x=".5" y="3" width="19" height="14" fill="#2a2a2c" stroke="#9a9a9a"/><path d="M3 6 5 7.500 3 9M6 9H9" stroke="#aaa" fill="none" stroke-width=".8"/></svg></div>
  <div class="cell46"><svg class="s20" viewBox="0 0 20 20"><circle cx="10" cy="10" r="9.700" fill="#fff"/><g stroke-width="2.400" stroke-linecap="round"><path d="M8 4.500V8M4.500 8H5" stroke="#36c5f0"/><path d="M12 8H15.500M12 5V5" stroke="#2eb67d"/><path d="M12 12V15.500M15 12H15.500" stroke="#ecb22e"/><path d="M4.500 12H8M8 15V15.500" stroke="#e01e5a"/></g></svg></div>
  <div class="cell46"><svg class="s20"><use href="#chrome"/></svg></div>
  <div class="cell46 cur2"><svg class="s20"><use href="#chrome"/></svg></div>
  <div class="tray2">
    <div class="batt">43%</div>
    <svg class="b1" viewBox="0 0 10 18"><path d="M1.500 0H3.500V5H6.500V0H8.500V5H10V9C10 11 8 13 6 13V18H4V13C2 13 0 11 0 9V5H1.500z" fill="#fff"/></svg>
    <svg class="b2"><use href="#chev"/></svg>
    <svg class="b3" viewBox="0 0 20 18"><path d="M1 6H3.500L7.500 2.500V15.500L3.500 12H1zM10.500 6.500C12 8 12 10 10.500 11.500M13.500 4.500C16 7 16 11 13.500 13.500M16.500 2C20 6 20 12 16.500 16" fill="none" stroke="#fff" stroke-width="1.200"/></svg>
    <svg class="b4" viewBox="0 0 14 18"><path d="M1 5H10V13H1zM10 8 13.500 6V12L10 10M3 2.500C5 0 9 0 11 2.500M3 15.500C5 18 9 18 11 15.500" fill="none" stroke="#fff" stroke-width="1.200"/></svg>
    <svg class="b5" viewBox="0 0 16 16"><path d="M1 15C1 7 7 1 15 1M5 15C5 9 9 5 15 5M9 15C9 11 11 9 15 9" fill="none" stroke="#e8ebe9" stroke-width="1.200"/><circle cx="14" cy="14" r="1.800" fill="#fff"/></svg>
    <span class="eng">ENG</span><span class="t24">22:42</span>
    <svg class="b6" viewBox="0 0 20 20"><path d="M0 0H20V16H13L10 20 7 16H0z" fill="#fff"/><path d="M4 5H16M4 8.500H16M4 12H12" stroke="#76807a" stroke-width="1.200"/></svg>
  </div>
</footer>

<svg class="cursor" viewBox="0 0 12 19"><path d="M.7.8V15.500L4 12.500 6.500 18 8.700 17 6.300 11.700H11z" fill="#fff" stroke="#222" stroke-width="1"/></svg>
<aside class="demo"><svg viewBox="0 0 14 14"><path d="M7 .8 1.500 7 7 13.200M13 .8 7.500 7 13 13.200" fill="none" stroke="#fff" stroke-width="2.200"/></svg><span>UDACITY NANODEGREE DEMO</span></aside>
<i class="edge"></i>
</body>
</html>
```
FILE: styles.css
```css
* { box-sizing: border-box; }
html, body { margin: 0; height: 100%; overflow: hidden; }
body { width: 1920px; height: 1080px; display: flex; flex-direction: column; background: #fff; font-family: "Open Sans", "Noto Sans", sans-serif; font-size: 13px; color: #000; position: relative; }
svg { display: block; flex: none; }
.defs { width: 0; height: 0; position: absolute; }

/* outer browser */
.browser { height: 88px; flex: none; background: #202124; border-bottom: 1px solid #26282b; }
.tabs { height: 42px; display: flex; align-items: center; padding-left: 12px; }
.tab { width: 47.300px; height: 42px; display: flex; align-items: center; flex: none; padding-left: 9.500px; position: relative; }
.tab svg { width: 20px; height: 20px; }
.tab:not(.first):not(.active):not(.bare) { background: linear-gradient(#55585c, #55585c) 0 9px / 1.300px 25px no-repeat; }
.tab.late { width: 46.250px; padding-left: 10px; }
.tab.bare { width: 45px; }
.tab .gh { color: #fff; }
.tab .gh-dark { color: #24292e; }
.tab.active { width: 49px; margin-left: -2px; background: #35363a; border-radius: 10px 10px 0 0; padding-left: 11px; }
.bar { width: 2px; height: 11px; background: #2a9fd0; }
.bar.dim { width: 1px; background: #3f5a8c; }
.tab .close { width: 11px; height: 11px; margin-left: 10px; color: #fff; }
.tab .snd { width: 13px; height: 13px; margin-left: 9px; }
.tab .plus { width: 16px; height: 16px; margin-left: 10px; }
.pe { font: bold 12px "Liberation Serif", serif; fill: #5a2b16; }
.winbtns { margin-left: auto; display: flex; align-items: center; padding-right: 22px; color: #fff; }
.w18 { width: 18px; height: 18px; margin-right: 47px; }
.w14 { width: 13px; height: 13px; margin-left: 44px; }
.up1 { margin-top: -4px; }
.w18 + .w14 { margin-left: 0; }
.w18 { margin-left: -20px; }
.toolbar { height: 45px; background: #35363a; display: flex; align-items: center; color: #f1f3f4; }
.t1, .t2, .t3 { width: 17px; height: 17px; }
.t1 { margin-left: 19px; }
.t2 { margin-left: 23px; transform: scaleX(-1); color: #7d7f83; }
.t3 { margin-left: 23px; }
.omni { width: 1610px; height: 35px; margin-left: 19px; border-radius: 18px; background: #202124; display: flex; align-items: center; padding-left: 17px; color: #9aa0a6; flex: none; }
.lk { width: 11px; height: 15px; color: #e8eaed; }
.url { margin-left: 15px; width: 1490px; flex: none; font-size: 16px; white-space: nowrap; letter-spacing: .44px; }
.url b { font-weight: 400; color: #fff; letter-spacing: 0; }
.mag { width: 17px; height: 17px; margin-left: 6px; }
.st { width: 18px; height: 18px; margin-left: 23px; color: #dfe1e5; }
.ext { width: 20px; height: 20px; margin-left: 20px; }
.omni + .ext { margin-left: 17px; }
.ava { width: 27px; height: 27px; margin-left: 18px; }
.dots { width: 4px; height: 18px; margin-left: 24px; }

.lab { height: 58px; flex: none; background: #1c262f; display: flex; align-items: center; color: #fff; padding-top: 8px; box-shadow: 0 1px 6px rgba(0,0,0,.6); position: relative; z-index: 1; }
.burger { width: 18px; height: 15px; margin-left: 22px; }
.lab-title { margin-left: 809px; width: 902px; font-size: 16px; }
.feedback { font-size: 12.500px; font-weight: 700; letter-spacing: 1.650px; white-space: nowrap; }

/* inner browser */
.itabs { height: 34px; flex: none; background: linear-gradient(#c9cfd3, #dadfe3 60%); display: flex; align-items: center; padding-top: 5px; }
.itab { width: 240px; height: 29px; margin-left: 8px; background: #fff; border-radius: 8px 8px 0 0; display: flex; align-items: center; color: #333; padding-bottom: 5px; }
.flask { width: 15px; height: 16px; margin-left: 13px; }
.ititle { margin-left: 8px; width: 174px; overflow: hidden; white-space: nowrap; font-size: 12px; letter-spacing: -.2px; mask-image: linear-gradient(90deg, #000 92%, transparent); -webkit-mask-image: linear-gradient(90deg, #000 92%, transparent); }
.iclose { width: 9px; height: 9px; margin-left: 9px; }
.iplus { width: 12px; height: 12px; margin: 0 0 5px 16px; }
.iwin { margin-left: auto; display: flex; gap: 35px; padding: 0 17px 8px 0; color: #111; }
.iwin svg { width: 11px; height: 11px; }
.ibar { height: 37px; flex: none; display: flex; align-items: center; color: #4d5156; border-bottom: 1px solid #dcdde0; }
.i1, .i2, .i3 { width: 14px; height: 14px; }
.i1 { margin-left: 15px; }
.i2 { margin-left: 18px; transform: scaleX(-1); color: #b9bcc0; }
.i3 { margin-left: 18px; }
.iomni { width: 1735px; height: 28px; margin-left: 15px; border-radius: 14px; background: #f7f3f7; display: flex; align-items: center; padding-left: 14px; flex: none; }
.ilk { width: 9px; height: 12px; }
.iurl { margin-left: 11px; width: 1676px; flex: none; white-space: nowrap; font-size: 13px; letter-spacing: .205px; color: #5f6368; }
.iurl b { font-weight: 400; color: #202124; letter-spacing: .05px; }
.ist { width: 15px; height: 15px; }
.user { width: 22px; height: 22px; margin-left: 12px; }
.upd { width: 16px; height: 16px; margin-left: 13px; }

.azbar { height: 40px; flex: none; background: #0078d7; color: #fff; display: flex; align-items: center; }
.az-name { width: 1495px; padding: 2px 0 0 16px; font-weight: 600; font-size: 13px; letter-spacing: .07px; }
.az-ic { width: 40.300px; height: 40px; display: flex; align-items: center; justify-content: center; position: relative; }
.az-ic svg { width: 18px; height: 18px; }
.badge { position: absolute; left: 22px; top: 2px; width: 16px; height: 16px; border-radius: 50%; background: #e81123; font-size: 10px; line-height: 16px; text-align: center; }
.az-acct { margin-left: 0; border-left: 1px solid #8cc1ee; padding: 2px 0 0 12px; width: 197px; height: 24px; display: flex; flex-direction: column; justify-content: center; line-height: 16px; white-space: nowrap; font-size: 13.500px; }
.az-acct b { font-size: 12px; font-weight: 700; letter-spacing: -.1px; }
.az-chev { width: 13px; height: 9px; margin-left: 1px; transform: scaleY(-1); }
.az-av { border-left: 1px solid #8cc1ee; margin-left: 12px; padding-left: 9px; height: 24px; display: flex; align-items: center; }
.az-av span { width: 24px; height: 24px; border-radius: 50%; background: #4f6bed; color: #10143a; font-size: 9px; line-height: 24px; text-align: center; }

/* app body */
.body { height: 747px; flex: none; display: flex; background: #fff; }
.side { width: 65px; background: #fffbff; border-right: 1px solid #d5d3d6; display: flex; flex-direction: column; flex: none; }
.side div { height: 32px; display: flex; align-items: center; justify-content: center; flex: none; }
.side div.on { background: #efebef; }
.side svg { width: 18px; height: 18px; fill: none; stroke: #0a5fdc; stroke-width: 1.100; }
.side svg.green { stroke: #5db300; stroke-width: 2; }
.side hr { width: 100%; height: 1px; border: 0; background: #e1dfe2; margin: 15px 0 13px; flex: none; }
.main { flex: 1; min-width: 0; display: flex; flex-direction: column; }
.crumbs { height: 33px; border-bottom: 1px solid #dcdadc; display: flex; align-items: center; padding: 0 0 1px 23.500px; font-size: 14px; flex: none; letter-spacing: -.37px; }
.crumbs a { color: #0a5fdc; white-space: nowrap; }
.crumbs svg { width: 6px; height: 10px; margin-right: 14px; }
.c1 { width: 51.500px; }
.c2 { width: 107px; } .c3 { width: 64px; } .c4 { width: 50px; }
.head { height: 45px; display: flex; align-items: center; padding: 0 0 2px 24px; flex: none; }
.head h1 { margin: 0; width: 78px; font-size: 17.500px; font-weight: 600; line-height: 24px; white-space: nowrap; }
.head svg { width: 16px; height: 16px; }
.head span { margin-left: 5px; }
.cmds { height: 37px; display: flex; align-items: center; padding: 0 0 2px 31px; flex: none; white-space: nowrap; }
.cmds div { display: flex; align-items: center; gap: 7px; }
.cmds svg { width: 18px; height: 18px; fill: none; stroke: #0a5fdc; stroke-width: 1.100; }
.k1 { width: 85px; letter-spacing: -.1px; } .k2 { width: 82px; letter-spacing: -.05px; } .k3 { width: 103px; } .k4 { width: 124px; letter-spacing: -.05px; } .k5 { color: #666; }
.cmds .k5 svg { stroke: #aaa; }
.cmds .k3 { gap: 8px; }
.pivot { height: 64px; display: flex; align-items: center; padding: 4px 0 0 35px; flex: none; white-space: nowrap; }
.p1 { width: 69px; } .p2 { width: 73.500px; } .p3 { width: 167.500px; letter-spacing: -.05px; }
.p4 { width: 49px; font-weight: 700; height: 44px; line-height: 42px; border-bottom: 2px solid #0a5fdc; padding-left: 1px; margin-right: 26px; letter-spacing: -.1px; }
.p5 { width: 122px; letter-spacing: .2px; } .p6 { width: 72px; } .p7 { width: 90px; }
.content { display: flex; padding-left: 24px; height: 543px; }
.panel { width: 297px; height: 528px; margin-top: 9px; border: 1px solid #e8e6e8; flex: none; padding: 11px 10px; }
.panel p { margin: 0; line-height: 19px; white-space: nowrap; letter-spacing: .03px; }
.search { height: 32px; margin-top: 15px; border: 1px solid #c8c6c8; border-radius: 2px; display: flex; align-items: center; color: #333; padding-left: 12px; letter-spacing: -.1px; }
.search svg { width: 17px; height: 17px; margin-right: 7px; color: #0a5fdc; }
.listwrap { height: 411px; margin-top: 8px; display: flex; overflow: hidden; }
.listwrap ul { list-style: none; margin: 0; padding: 0 0 0 8px; width: 258px; letter-spacing: -.03px; }
.listwrap li { height: 36px; display: flex; align-items: center; white-space: nowrap; }
.listwrap i { width: 20px; height: 20px; border: 1px solid #111; border-radius: 2px; margin-right: 8px; flex: none; }
.listwrap i.on { background: #0a5fdc; border: 0; }
.listwrap i svg { width: 20px; height: 20px; }
.sbar { width: 17px; background: #f6f2f6; display: flex; flex-direction: column; align-items: center; flex: none; }
.sbar b { border: 4px solid transparent; width: 0; height: 0; }
.sbar .up { border-bottom-color: #a3a1a3; border-top: 0; margin: 7px 0 6px; }
.sbar .dn { border-top-color: #505050; border-bottom: 0; margin: auto 0 7px; }
.sbar em { width: 13px; height: 187px; background: #c3c1c4; }
.viz { margin-left: 24px; flex: 1; min-width: 0; }
.viewas { display: flex; align-items: center; height: 20px; margin-top: 20px; }
.va { width: 68px; }
.viewas i { width: 20px; height: 20px; border: 1px solid #222; border-radius: 50%; margin-right: 6px; }
.viewas i.sel { border-color: #0a5fdc; background: radial-gradient(circle, #0a5fdc 5px, transparent 5.500px); }
.vc { width: 49px; }
.vt { letter-spacing: -.4px; }
.vbody { display: flex; height: 483px; margin-top: 13px; }
.vleft { width: 1469px; flex: none; overflow: hidden; }
.cards { display: flex; padding: 5px 0 0 5px; height: 111px; }
.cards div { width: 112px; height: 60px; border-left: 5px solid #0078d7; padding: 2px 0 0 8px; display: flex; flex-direction: column; justify-content: center; white-space: nowrap; }
.cards span { font-size: 15px; color: #666; line-height: 24px; letter-spacing: .06px; }
.cards b { font-size: 17.500px; line-height: 28px; font-weight: 600; letter-spacing: .3px; }
.charts { display: flex; margin-left: 90px; }
.ch1 { width: 700px; height: 372px; }
.ch2 { width: 679px; height: 372px; }
.main-bar em { height: 125px; }

/* charts */
.charts text { font-family: "DejaVu Sans", sans-serif; fill: #333; font-size: 11px; }
.charts text.ctitle { font-size: 13px; }
.charts text.ay { font-size: 12px; }
.charts .ax text { text-anchor: end; font-size: 10.500px; }
.charts text.off { fill: #999; }
.grid { stroke: #ebe9eb; stroke-width: 1; fill: none; }
.grid.zero { stroke-width: 2; }
.s { fill: none; stroke-width: 3; }
.thick { fill: none; stroke-width: 5.500; stroke-linejoin: round; stroke-linecap: round; }
.thicker { fill: none; stroke-width: 6.500; stroke-linejoin: round; stroke-linecap: round; }
.blue { stroke: #0078d4; } .navy { stroke: #00188f; } .teal { stroke: #00a2ad; }
.s.blue { marker: url(#mb); } .s.navy { marker: url(#mn); } .s.teal { marker: url(#mt); }
.ideal { fill: none; stroke: #32145a; stroke-width: 3; stroke-dasharray: 9 3 3 3; }
.rnd { stroke: #9780e5; }
.lg path { stroke-width: 3; fill: none; }
.dot { stroke-dasharray: 3 3; }

/* taskbars */
.tb { height: 38px; flex: none; display: flex; align-items: center; color: #fff; }
.tb > div { height: 38px; display: flex; align-items: center; justify-content: center; flex: none; }
.inner { background: #000; }
.cell48 { width: 48px; padding-top: 1px; } .cell49 { width: 49px; padding-top: 2px; } .cell49.pad { width: 51px; padding-left: 2px; }
.cell49.cur { background: #333; }
.s16 { width: 16px; height: 16px; } .s16w { width: 16px; height: 16px; }
.s20 { width: 20px; height: 20px; } .s20w { width: 20px; height: 20px; }
.s22 { width: 23px; height: 22px; } .s24 { width: 24px; height: 24px; }
.tb > .tray1, .tb > .tray2 { margin-left: auto; justify-content: flex-start; }
.tray1 { width: 183px; }
.a1 { width: 12px; height: 8px; }
.a2 { width: 17px; height: 14px; margin-left: 10px; }
.a3 { width: 17px; height: 14px; margin-left: 7px; }
.clock { width: 54px; margin-left: 8px; display: flex; flex-direction: column; align-items: center; font-size: 11.300px; line-height: 18px; letter-spacing: -.3px; }
.a4 { width: 17px; height: 17px; margin-left: 17px; }
.outer { background: linear-gradient(90deg, #727c72, #77827b 50%, #7d8985 82%, #747f75); }
.cell45 { width: 44.800px; }
.split { width: 23px; } .split i { width: 4px; height: 22px; border: solid #a6ada8; border-width: 0 1px; margin-right: 5px; }
.cell46 { width: 46px; }
.cell46.run { background: linear-gradient(90deg, #b3c4bd 24px, #707b74 24px 25px, #93a09a 25px) 6px 35px / 35px 3px no-repeat; }
.cell46.cur2 { background: linear-gradient(#828f88 35px, #b3c4bd 35px); }
.ell { width: 20px; height: 20px; background: #23a9dc; font-weight: 700; font-size: 16px; line-height: 20px; text-align: center; }
.tray2 { width: 371px; }
.batt { width: 61px; height: 25px; border: 3px solid #fff; background: linear-gradient(90deg, #169b46 22px, #000 22px); font-size: 15.500px; line-height: 19px; text-align: center; position: relative; }
.batt::after { content: ""; position: absolute; right: -6px; top: 4px; width: 3px; height: 11px; background: #fff; }
.b1 { width: 10px; height: 18px; margin-left: 11px; }
.b2 { width: 16px; height: 10px; margin-left: 14px; }
.b3 { width: 21px; height: 18px; margin-left: 12px; }
.b4 { width: 14px; height: 18px; margin-left: 14px; }
.b5 { width: 16px; height: 16px; margin-left: 15px; }
.eng { margin-left: 13px; width: 45px; font-size: 14.300px; letter-spacing: -.4px; }
.t24 { width: 58px; font-size: 14.500px; letter-spacing: -.4px; }
.b6 { width: 20px; height: 20px; }

.cursor { position: absolute; left: 1201px; top: 459px; width: 12px; height: 19px; }
.demo { position: absolute; left: 1892px; top: 348px; width: 26px; height: 203px; background: #337ab7; border-radius: 2px; box-shadow: 0 0 4px rgba(0,0,0,.4); display: flex; flex-direction: column; align-items: center; padding: 9px 1px 0 0; color: #fff; }
.demo svg { width: 14px; height: 14px; }
.demo span { writing-mode: vertical-rl; margin-top: 7px; font-size: 11.500px; font-weight: 600; white-space: nowrap; letter-spacing: .08px; }
.edge { position: absolute; left: 1915px; top: 1004px; width: 1px; height: 76px; background: #8a918c; }
```
